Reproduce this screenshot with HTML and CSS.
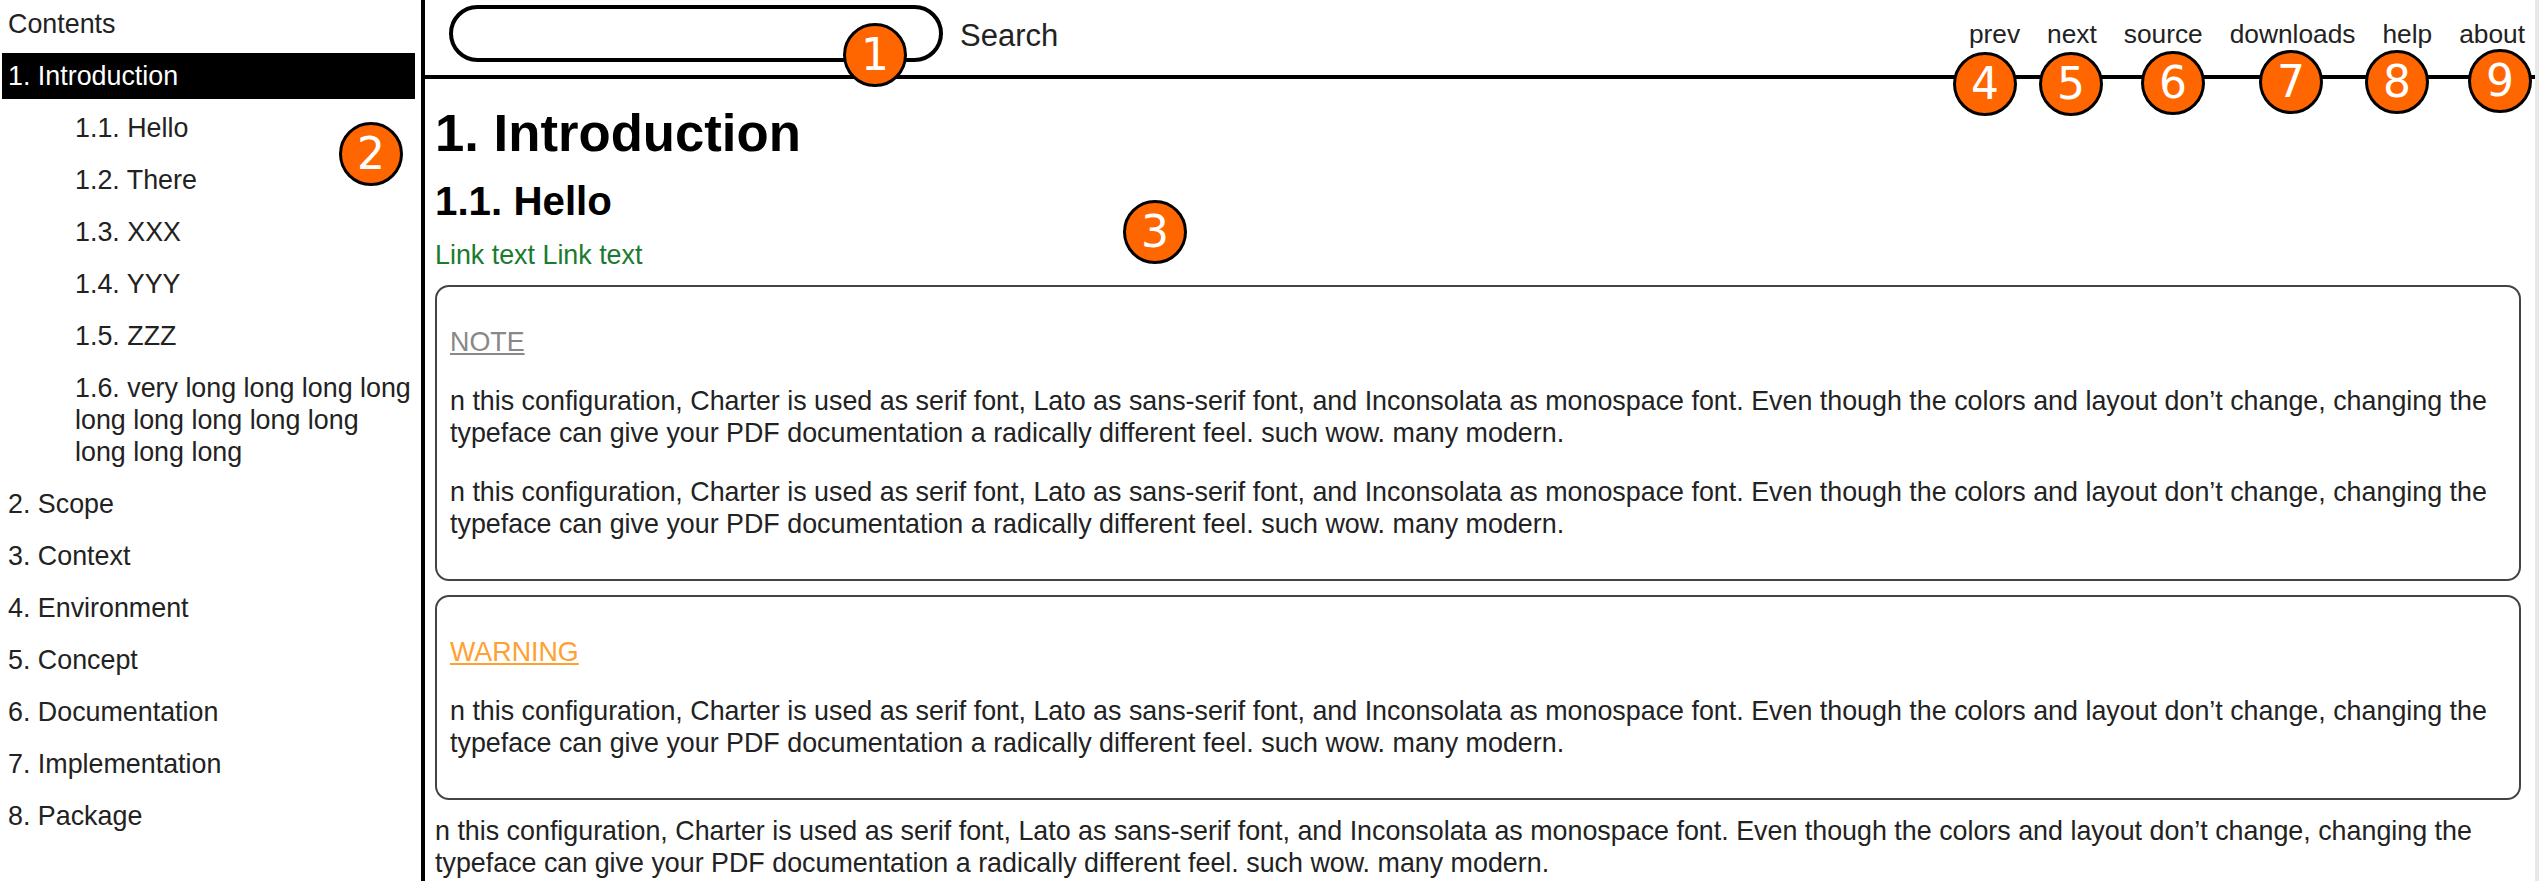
FILE: index.html
```html
<!DOCTYPE html>
<html lang="en">
<head>
<meta charset="utf-8">
<title>Introduction</title>
<link rel="stylesheet" href="styles.css">
</head>
<body>
<div class="page">
  <aside class="sidebar">
    <div class="toc-title">Contents</div>
    <ul class="toc">
      <li class="toc-item active">1. Introduction</li>
      <li class="toc-item sub">1.1. Hello</li>
      <li class="toc-item sub">1.2. There</li>
      <li class="toc-item sub">1.3. XXX</li>
      <li class="toc-item sub">1.4. YYY</li>
      <li class="toc-item sub">1.5. ZZZ</li>
      <li class="toc-item sub">1.6. very long long long long long long long long long long long long</li>
      <li class="toc-item">2. Scope</li>
      <li class="toc-item">3. Context</li>
      <li class="toc-item">4. Environment</li>
      <li class="toc-item">5. Concept</li>
      <li class="toc-item">6. Documentation</li>
      <li class="toc-item">7. Implementation</li>
      <li class="toc-item">8. Package</li>
    </ul>
  </aside>
  <div class="main">
    <header class="topbar">
      <form class="search">
        <input class="search-input" type="text" aria-label="Search">
        <span class="search-label">Search</span>
      </form>
      <nav class="nav">
        <a>prev</a><a>next</a><a>source</a><a>downloads</a><a>help</a><a>about</a>
      </nav>
    </header>
    <main class="content">
      <h1>1. Introduction</h1>
      <h2>1.1. Hello</h2>
      <p class="links"><a>Link text</a> <a>Link text</a></p>
      <section class="admonition note">
        <p class="adm-title">NOTE</p>
        <p>n this configuration, Charter is used as serif font, Lato as sans-serif font, and Inconsolata as monospace font. Even though the colors and layout don’t change, changing the typeface can give your PDF documentation a radically different feel. such wow. many modern.</p>
        <p>n this configuration, Charter is used as serif font, Lato as sans-serif font, and Inconsolata as monospace font. Even though the colors and layout don’t change, changing the typeface can give your PDF documentation a radically different feel. such wow. many modern.</p>
      </section>
      <section class="admonition warning">
        <p class="adm-title">WARNING</p>
        <p>n this configuration, Charter is used as serif font, Lato as sans-serif font, and Inconsolata as monospace font. Even though the colors and layout don’t change, changing the typeface can give your PDF documentation a radically different feel. such wow. many modern.</p>
      </section>
      <p class="body-text">n this configuration, Charter is used as serif font, Lato as sans-serif font, and Inconsolata as monospace font. Even though the colors and layout don’t change, changing the typeface can give your PDF documentation a radically different feel. such wow. many modern.</p>
    </main>
  </div>
</div>
<span class="marker m1">1</span>
<span class="marker m2">2</span>
<span class="marker m3">3</span>
<span class="marker m4">4</span>
<span class="marker m5">5</span>
<span class="marker m6">6</span>
<span class="marker m7">7</span>
<span class="marker m8">8</span>
<span class="marker m9">9</span>
</body>
</html>
```
FILE: styles.css
```css
* { box-sizing: border-box; }
html, body { margin: 0; height: 881px; overflow: hidden; background: #fff; }
body {
  position: relative;
  font-family: "Liberation Sans", Arial, sans-serif;
  font-size: 26.85px;
  line-height: 32px;
  color: #222;
}
.page { display: flex; height: 881px; }
.sidebar { width: 425px; flex: none; border-right: 4px solid #000; padding: 8px 0 0 2px; }
.toc-title { padding-left: 6px; height: 45px; }
.toc { list-style: none; margin: 0; padding: 0; }
.toc-item { padding: 7px 6px; width: 413px; margin-bottom: 6px; }
.toc-item.sub { padding: 7px 3px 7px 73px; }
.toc-item.active { background: #000; color: #fff; }
.main { flex: 1; min-width: 0; border-right: 4px solid #e8e8e8; }
.topbar { height: 79px; border-bottom: 4px solid #000; display: flex; justify-content: space-between; padding: 5px 10px 0 24px; }
.search { display: flex; align-items: flex-start; gap: 17px; }
.search-input { width: 494px; height: 57px; border: 4px solid #000; border-radius: 29px; background: #fff; padding: 0; margin: 0; outline: none; }
.search-label { font-size: 31px; line-height: 48px; margin-top: 7px; }
.nav { display: flex; gap: 27px; padding-top: 13px; font-size: 26.3px; }
.content { padding: 0 14px 0 10px; }
h1 { font-size: 52.7px; line-height: 60px; font-weight: 700; margin: 24px 0 0; color: #000; }
h2 { font-size: 40.3px; line-height: 48px; font-weight: 700; margin: 15px 0 0; color: #000; }
.links { margin: 13px 0 0; color: #1a7a2e; }
p { margin: 0; }
.admonition { border: 2px solid #444; border-radius: 14px; padding: 39px 14px 39px 13px; margin-top: 14px; }
.admonition p + p { margin-top: 27px; }
.adm-title { text-decoration: underline; }
.note .adm-title { color: #888; }
.warning .adm-title { color: #ffa033; }
.body-text { margin-top: 15px; }
.marker {
  position: absolute;
  width: 64px;
  height: 64px;
  border: 3px solid #000;
  border-radius: 50%;
  background: #ff6600;
  color: #fff;
  font-family: "DejaVu Sans", sans-serif;
  font-size: 44px;
  line-height: 58px;
  text-align: center;
}
.m1 { left: 843px; top: 23px; }
.m2 { left: 339px; top: 122px; }
.m3 { left: 1123px; top: 200px; }
.m4 { left: 1953px; top: 52px; }
.m5 { left: 2039px; top: 52px; }
.m6 { left: 2141px; top: 51px; }
.m7 { left: 2259px; top: 50px; }
.m8 { left: 2365px; top: 50px; }
.m9 { left: 2468px; top: 49px; }
```
